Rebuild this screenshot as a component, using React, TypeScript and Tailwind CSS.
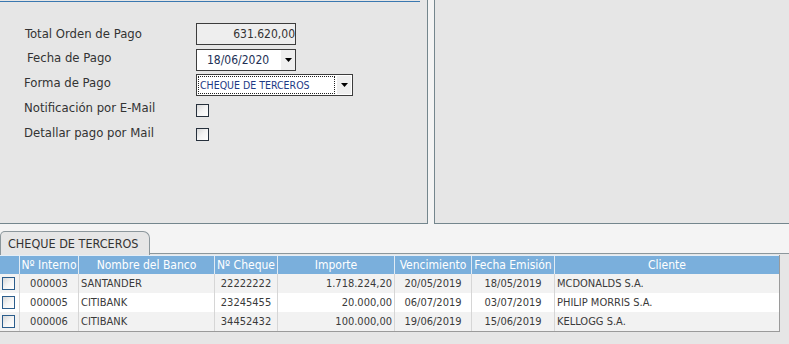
import React from "react";

const font = { fontFamily: "'DejaVu Sans Condensed', 'DejaVu Sans', sans-serif", fontStretch: "condensed" } as React.CSSProperties;

function Check({ table }: { table?: boolean }) {
  return (
    <div
      className={
        "w-[13px] h-[13px] border bg-gradient-to-br from-[#d9d9d9] via-[#f4f4f4] to-white " +
        (table ? "border-[#2b5d8c]" : "border-[#26303c]")
      }
    />
  );
}

function Arrow() {
  return (
    <div className="w-[14px] h-full bg-[#efefef] flex items-center justify-center">
      <svg width="7" height="4" viewBox="0 0 7 4">
        <path d="M0 0H7L3.5 4Z" fill="#000" />
      </svg>
    </div>
  );
}

const cols = [
  { w: 19, label: "", align: "center" },
  { w: 59, label: "Nº Interno", align: "center" },
  { w: 136, label: "Nombre del Banco", align: "left" },
  { w: 63, label: "Nº Cheque", align: "center" },
  { w: 117, label: "Importe", align: "right" },
  { w: 77, label: "Vencimiento", align: "center" },
  { w: 83, label: "Fecha Emisión", align: "center" },
  { w: 225, label: "Cliente", align: "left" },
];

const rows = [
  ["000003", "SANTANDER", "22222222", "1.718.224,20", "20/05/2019", "18/05/2019", "MCDONALDS S.A."],
  ["000005", "CITIBANK", "23245455", "20.000,00", "06/07/2019", "03/07/2019", "PHILIP MORRIS S.A."],
  ["000006", "CITIBANK", "34452432", "100.000,00", "19/06/2019", "15/06/2019", "KELLOGG S.A."],
];

export default function App() {
  return (
    <div className="w-[789px] h-[344px] bg-[#f4f4f4] overflow-hidden flex flex-col" style={font}>
      {/* top area */}
      <div className="flex h-[224px] shrink-0">
        <div className="w-[428px] h-[224px] bg-[#e6e6e6] border-r border-b border-[#74868d] flex flex-col">
          <div className="mt-px h-px w-[420px] bg-[#3a78b0]" />
          <div className="flex flex-col text-[13px] text-[#333]">
            {/* row 1 */}
            <div className="flex mt-[21px] h-[22px]">
              <div className="w-[196px] pl-[25px] pt-[3px] leading-[16px]">Total Orden de Pago</div>
              <div className="w-[100px] h-[22px] border border-[#3c3c3c] bg-[#eeeeee] flex items-center justify-end text-[12px] text-[#333] leading-none">
                631.620,00
              </div>
            </div>
            {/* row 2 */}
            <div className="flex mt-[4px] h-[21px]">
              <div className="w-[196px] pl-[27px] pt-px leading-[16px]">Fecha de Pago</div>
              <div className="w-[100px] h-[22px] border border-[#3c3c3c] bg-white flex items-center text-[12px] leading-none">
                <div className="flex-1 pl-[10px] text-[#223055]">18/06/2020</div>
                <Arrow />
              </div>
            </div>
            {/* row 3 */}
            <div className="flex mt-[4px] h-[22px]">
              <div className="w-[196px] pl-[24px] pt-px leading-[16px]">Forma de Pago</div>
              <div className="w-[157px] h-[22px] border border-[#3c3c3c] bg-white flex items-stretch p-px leading-none">
                <div className="flex-1 border border-dotted border-[#222] flex items-center text-[#1d3a86] text-[10.5px] pl-px">
                  CHEQUE DE TERCEROS
                </div>
                <div className="w-[2px]" />
                <Arrow />
              </div>
            </div>
            {/* row 4 */}
            <div className="flex mt-[8px] h-[13px]">
              <div className="w-[196px] pl-[24px] -mt-[4px] leading-[16px]">Notificación por E-Mail</div>
              <Check />
            </div>
            {/* row 5 */}
            <div className="flex mt-[11px] h-[13px]">
              <div className="w-[196px] pl-[24px] -mt-[3px] leading-[16px]">Detallar pago por Mail</div>
              <Check />
            </div>
          </div>
        </div>
        <div className="w-[6px]" />
        <div className="flex-1 h-[224px] bg-[#e6e6e6] border-l border-b border-[#74868d]" />
      </div>

      {/* tab strip */}
      <div className="h-[6px] shrink-0" />
      <div className="flex h-[24px] shrink-0 items-end">
        <div className="w-[150px] h-[24px] bg-[#e6e6e6] border-t border-r border-l border-[#8c979c] rounded-tr-[7px] rounded-tl-[5px] flex items-center pl-[7px] text-[12.5px] text-[#333] leading-none pt-[2px] relative z-10 -mb-px">
          CHEQUE DE TERCEROS
        </div>
        <div className="flex-1 h-px bg-[#8c979c]" />
      </div>

      {/* content panel */}
      <div className="flex-1 bg-[#e6e6e6] pt-px">
        <div className="w-[780px] border-r border-b border-[#9a9a9a]">
          <div className="flex h-[19px] bg-[#7aafdc] border-t border-[#e4eef7] text-white text-[12px] leading-none">
            {cols.map((c, i) => (
              <div
                key={i}
                className={
                  "h-full flex items-center justify-center whitespace-nowrap overflow-hidden " +
                  (i > 0 ? "border-l border-[#e1ebf4]" : "")
                }
                style={{ width: c.w }}
              >
                {c.label}
              </div>
            ))}
          </div>
          {rows.map((r, ri) => (
            <div
              key={ri}
              className={"flex h-[19px] text-[11px] text-[#3a3a3a] leading-none " + (ri % 2 === 1 ? "bg-white" : "bg-[#f2f2f2]")}
            >
              <div className="w-[19px] h-full flex items-center pl-[2px]">
                <Check table />
              </div>
              {r.map((v, i) => {
                const c = cols[i + 1];
                const j =
                  c.align === "left" ? "justify-start pl-[2px]" : c.align === "right" ? "justify-end pr-[2px]" : "justify-center";
                return (
                  <div
                    key={i}
                    className={"h-full flex items-center whitespace-nowrap overflow-hidden border-l border-[#d6d6d6] " + j}
                    style={{ width: c.w }}
                  >
                    {v}
                  </div>
                );
              })}
            </div>
          ))}
        </div>
      </div>
    </div>
  );
}
